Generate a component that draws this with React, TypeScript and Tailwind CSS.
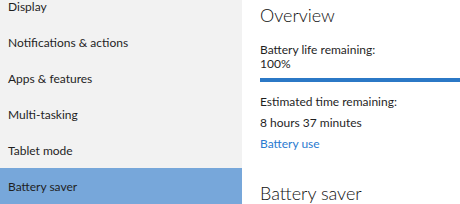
import React from 'react';

const navItems = ['Display', 'Notifications & actions', 'Apps & features', 'Multi-tasking', 'Tablet mode', 'Battery saver'];

export default function App() {
  const selected = 'Battery saver';

  return (
    <div className="flex h-[204px] w-[460px] overflow-hidden bg-white text-[12px] text-[#1f1f1f] [font-family:Lato,'Open_Sans',sans-serif]">
      <nav className="w-[242px] shrink-0 bg-[#f2f2f2]">
        <ul className="-mt-[12px]">
          {navItems.map((item) => (
            <li
              key={item}
              className={`flex h-[36px] items-center pl-[8px] pt-[2px] ${item === selected ? 'bg-[#77a7da]' : ''}`}
            >
              {item}
            </li>
          ))}
        </ul>
      </nav>

      <main className="flex-1 pl-[18px]">
        <h1 className="mt-[3px] text-[18px] font-light leading-[24px] text-[#111]">Overview</h1>
        <p className="mt-[16px] leading-[13px]">Battery life remaining:</p>
        <p className="mt-[1px] leading-[13px]">100%</p>
        <div className="mt-[8px] h-[4px] w-full bg-[#2b78c6]" />
        <p className="mt-[13px] leading-[14px]">Estimated time remaining:</p>
        <p className="mt-[7px] leading-[14px]">8 hours 37 minutes</p>
        <a className="mt-[7px] block leading-[14px] text-[#2a7ad0]">Battery use</a>
        <h2 className="mt-[30px] text-[18px] font-light leading-[24px] text-[#111]">Battery saver</h2>
      </main>
    </div>
  );
}
